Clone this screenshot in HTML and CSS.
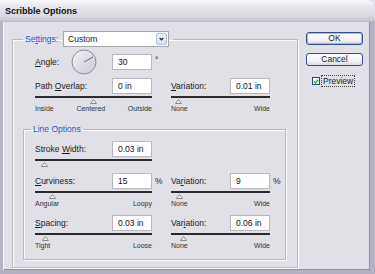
FILE: index.html
```html
<!DOCTYPE html>
<html lang="en">
<head>
    <meta charset="UTF-8">
    <title>Scribble Options</title>
    <link rel="stylesheet" href="styles.css">
</head>
<body>
<div class="window">
    <div class="titlebar">Scribble Options</div>
    <div class="client">
        <fieldset class="group outer">
            <legend class="settings">
                <span class="blue">Se<u>t</u>tings:</span>
                <div class="select">
                    <span>Custom</span>
                    <span class="drop">
                        <svg width="11" height="13" viewBox="0 0 11 13"><path d="M3 5 L5.5 7.5 L8 5" fill="none" stroke="#222" stroke-width="1.6"/></svg>
                    </span>
                </div>
            </legend>

            <div class="angle-row">
                <span class="angle-label"><u>A</u>ngle:</span>
                <svg class="dial" width="26" height="26" viewBox="0 0 26 26">
                    <defs>
                        <linearGradient id="dialFill" x1="0" y1="0" x2="1" y2="1">
                            <stop offset="0" stop-color="#f4f4f7"/>
                            <stop offset="1" stop-color="#c8c8d1"/>
                        </linearGradient>
                    </defs>
                    <circle cx="13" cy="13" r="12" fill="url(#dialFill)" stroke="#8d8c9b"/>
                    <line x1="13" y1="13" x2="22" y2="8" stroke="#5a5a66" stroke-width="0.9"/>
                </svg>
                <span class="input">30</span><span class="unit deg">&deg;</span>
            </div>

            <div class="pair">
                <div class="field col1">
                    <div class="row"><span class="label">Path <u>O</u>verlap:</span><span class="input">0 in</span></div>
                    <div class="track"></div>
                    <div class="thumb" style="margin-left:55px"><svg width="7" height="5"><polygon points="3.5,0.5 6.5,4.5 0.5,4.5" fill="#f2f2f4" stroke="#8a8a8e"/></svg></div>
                    <div class="scale"><span>Inside</span><span>Centered</span><span>Outside</span></div>
                </div>
                <div class="field col2">
                    <div class="row"><span class="label"><u>V</u>ariation:</span><span class="input">0.01 in</span></div>
                    <div class="track"></div>
                    <div class="thumb" style="margin-left:4px"><svg width="7" height="5"><polygon points="3.5,0.5 6.5,4.5 0.5,4.5" fill="#f2f2f4" stroke="#8a8a8e"/></svg></div>
                    <div class="scale"><span>None</span><span>Wide</span></div>
                </div>
            </div>

            <fieldset class="group inner">
                <legend class="blue">Line Options</legend>

                <div class="field col1 stroke">
                    <div class="row"><span class="label">Stroke <u>W</u>idth:</span><span class="input">0.03 in</span></div>
                    <div class="track"></div>
                    <div class="thumb" style="margin-left:6px"><svg width="7" height="5"><polygon points="3.5,0.5 6.5,4.5 0.5,4.5" fill="#f2f2f4" stroke="#8a8a8e"/></svg></div>
                </div>

                <div class="pair">
                    <div class="field col1">
                        <div class="row"><span class="label"><u>C</u>urviness:</span><span class="input">15</span><span class="unit">%</span></div>
                        <div class="track"></div>
                        <div class="thumb" style="margin-left:14px"><svg width="7" height="5"><polygon points="3.5,0.5 6.5,4.5 0.5,4.5" fill="#f2f2f4" stroke="#8a8a8e"/></svg></div>
                        <div class="scale"><span>Angular</span><span>Loopy</span></div>
                    </div>
                    <div class="field col2">
                        <div class="row"><span class="label">Va<u>r</u>iation:</span><span class="input">9</span><span class="unit">%</span></div>
                        <div class="track"></div>
                        <div class="thumb" style="margin-left:5px"><svg width="7" height="5"><polygon points="3.5,0.5 6.5,4.5 0.5,4.5" fill="#f2f2f4" stroke="#8a8a8e"/></svg></div>
                        <div class="scale"><span>None</span><span>Wide</span></div>
                    </div>
                </div>

                <div class="pair">
                    <div class="field col1">
                        <div class="row"><span class="label"><u>S</u>pacing:</span><span class="input">0.03 in</span></div>
                        <div class="track"></div>
                        <div class="thumb" style="margin-left:7px"><svg width="7" height="5"><polygon points="3.5,0.5 6.5,4.5 0.5,4.5" fill="#f2f2f4" stroke="#8a8a8e"/></svg></div>
                        <div class="scale"><span>Tight</span><span>Loose</span></div>
                    </div>
                    <div class="field col2">
                        <div class="row"><span class="label">Var<u>i</u>ation:</span><span class="input">0.06 in</span></div>
                        <div class="track"></div>
                        <div class="thumb" style="margin-left:9px"><svg width="7" height="5"><polygon points="3.5,0.5 6.5,4.5 0.5,4.5" fill="#f2f2f4" stroke="#8a8a8e"/></svg></div>
                        <div class="scale"><span>None</span><span>Wide</span></div>
                    </div>
                </div>
            </fieldset>
        </fieldset>

        <div class="buttons">
            <div class="btn default">OK</div>
            <div class="btn">Cancel</div>
            <div class="preview">
                <span class="check">
                    <svg width="7" height="7" viewBox="0 0 7 7"><path d="M1 3.5 L2.8 5.3 L6 1.5" fill="none" stroke="#21a121" stroke-width="1.5"/></svg>
                </span>
                <span class="focus">Preview</span>
            </div>
        </div>
    </div>
</div>
</body>
</html>
```

FILE: styles.css
```css
body {
    margin: 0;
    padding: 0;
    background: #e1e0e6;
    font-family: "Liberation Sans", Arial, sans-serif;
    font-size: 8.5px;
    color: #1a1a1e;
}
u {
    text-decoration: underline;
    text-underline-offset: 1px;
}
.window {
    width: 375px;
    height: 274px;
    box-sizing: border-box;
    display: flex;
    flex-direction: column;
    background: #e1e0e6;
    border-left: 3px solid #b5b4c4;
    border-right: 5px solid #b5b4c4;
    border-bottom: 4px solid #b2b1c2;
    border-top-right-radius: 7px;
    box-shadow: inset 1px 0 0 #f4f4f8, inset -1px -1px 0 #8f8ea3;
}
.titlebar {
    height: 22px;
    box-sizing: border-box;
    margin-left: -3px;
    margin-right: -5px;
    padding-left: 5px;
    line-height: 23px;
    font-size: 9px;
    font-weight: bold;
    color: #111;
    background: linear-gradient(#fafafc 0%, #e8e8ee 25%, #d9d9e2 75%, #c4c4d0 100%);
    border-top-right-radius: 7px;
    border-bottom: 1px solid #bdbccb;
}
.client {
    display: flex;
    align-items: flex-start;
}

/* Group boxes */
.group {
    margin: 0;
    min-inline-size: 0;
    border: 1px solid #b9b8c3;
    box-shadow: inset 1px 1px 0 #fbfbfd, 1px 1px 0 #fbfbfd;
}
.outer {
    width: 286px;
    box-sizing: border-box;
    margin: 9px 0 0 9px;
    padding: 2px 11px 7px 10px;
}
.outer > .angle-row,
.outer > .pair {
    margin-left: 12px;
}
.inner {
    width: 263px;
    box-sizing: border-box;
    margin-top: 10px;
    padding: 6px 15px 8px 11px;
}
.inner > legend {
    margin-left: -4px;
    padding: 0 2px;
    line-height: 11px;
}
.blue {
    color: #1f4fd0;
}
.settings {
    display: flex;
    align-items: center;
    padding: 0 4px 0 2px;
}
.select {
    display: flex;
    align-items: center;
    justify-content: space-between;
    width: 106px;
    height: 16px;
    box-sizing: border-box;
    margin-left: 5px;
    padding: 0 1px 0 4px;
    background: #fff;
    border: 1px solid #a6a5b0;
}
.drop {
    display: flex;
    width: 11px;
    height: 12px;
    box-sizing: border-box;
    border: 1px solid #b5c4df;
    border-radius: 2px;
    background: linear-gradient(#f4f6fb, #d8dde9);
    align-items: center;
    justify-content: center;
}
.drop svg {
    width: 9px;
    height: 10px;
}

/* Rows */
.angle-row {
    display: flex;
    align-items: center;
    height: 26px;
    margin-bottom: 3px;
}
.angle-label {
    flex: none;
    width: 36px;
    white-space: nowrap;
}
.dial {
    display: block;
    flex: none;
}
.angle-row .input {
    margin-left: 15px;
}
.pair {
    display: flex;
    gap: 19px;
}
.col1 {
    width: 117px;
}
.col2 {
    width: 99px;
}
.stroke {
    margin-bottom: 6px;
}
.inner .pair + .pair {
    margin-top: 6px;
}
.row {
    display: flex;
    align-items: center;
    height: 16px;
}
.label {
    flex: 1;
    white-space: nowrap;
}
.input {
    flex: none;
    width: 40px;
    height: 16px;
    box-sizing: border-box;
    padding-left: 5px;
    line-height: 14px;
    background: #fff;
    border: 1px solid #b8b7c0;
    color: #111;
}
.unit {
    flex: none;
    width: 0;
    text-indent: 3px;
    white-space: nowrap;
}
.deg {
    align-self: flex-start;
    margin-top: 6px;
}
.track {
    height: 2px;
    margin-top: 2px;
    background: #2a2a2e;
}
.thumb {
    height: 5px;
    margin-top: 1px;
}
.thumb svg {
    display: block;
}
.scale {
    display: flex;
    justify-content: space-between;
    height: 10px;
    line-height: 10px;
    font-size: 7px;
    color: #333;
}

/* Buttons */
.buttons {
    display: flex;
    flex-direction: column;
    width: 57px;
    margin: 10px 0 0 8px;
}
.btn {
    height: 13px;
    box-sizing: border-box;
    margin-bottom: 8px;
    text-align: center;
    line-height: 11px;
    border: 1px solid #32508e;
    border-radius: 3px;
    background: linear-gradient(#ffffff, #f0f0f3 70%, #d9d8e0);
}
.btn.default {
    box-shadow: inset 0 0 0 1px #9ab8ec;
}
.preview {
    display: flex;
    align-items: center;
    margin-top: 2px;
    padding-left: 6px;
}
.check {
    display: flex;
    align-items: center;
    justify-content: center;
    width: 8px;
    height: 8px;
    box-sizing: border-box;
    border: 1px solid #1f4c7f;
    background: #fff;
}
.focus {
    margin-left: 2px;
    padding: 0 1px;
    line-height: 10px;
    outline: 1px dotted #444;
}
```
